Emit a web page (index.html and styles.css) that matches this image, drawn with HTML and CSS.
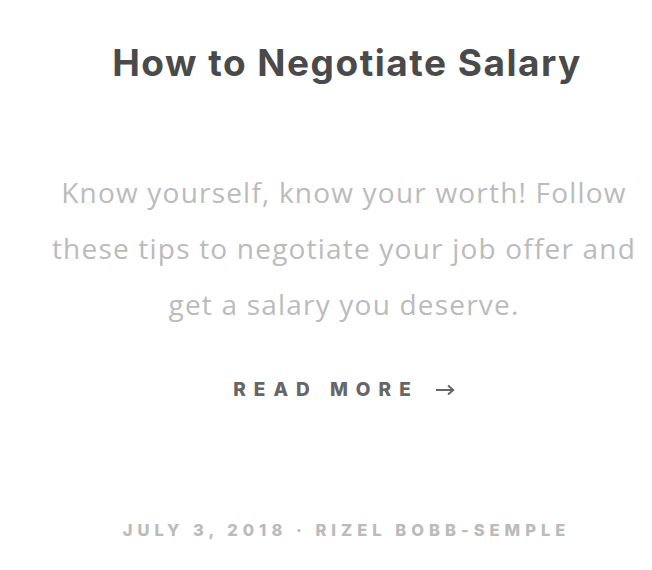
FILE: index.html
```html
<!DOCTYPE html>
<html>
<head>
<meta charset="utf-8">
<link rel="stylesheet" href="styles.css">
</head>
<body>
<article class="post">
  <h1 class="title">How to Negotiate Salary</h1>
  <p class="excerpt">Know yourself, know your worth! Follow these tips to negotiate your job offer and get a salary you deserve.</p>
  <a class="more" href="#"><span class="more-label">READ MORE</span><svg class="arrow" width="20" height="12" viewBox="0 0 20 12"><path d="M1 6H18M13 1.5L18.2 6L13 10.5" fill="none" stroke="#666" stroke-width="2"/></svg></a>
  <div class="meta">JULY 3, 2018 &middot; RIZEL BOBB-SEMPLE</div>
</article>
</body>
</html>
```
FILE: styles.css
```css
html, body {
  margin: 0;
  padding: 0;
  background: #fff;
}
.post {
  box-sizing: border-box;
  width: 652px;
  padding-left: 36px;
  display: flex;
  flex-direction: column;
  align-items: center;
  text-align: center;
}
.title {
  margin: 38px 0 0 6px;
  font-family: Inter, "Liberation Sans", sans-serif;
  font-weight: 700;
  font-size: 37px;
  line-height: 50px;
  letter-spacing: 1.5px;
  color: #4a4a4a;
}
.excerpt {
  margin: 76px 0 0;
  width: 600px;
  font-family: "Open Sans", sans-serif;
  font-weight: 400;
  font-size: 28px;
  line-height: 56px;
  letter-spacing: 1.2px;
  color: #bbbbbb;
}
.more {
  margin-top: 46px;
  display: flex;
  align-items: center;
  gap: 16px;
  font-family: Inter, sans-serif;
  font-weight: 800;
  font-size: 19px;
  letter-spacing: 8px;
  color: #666;
  text-decoration: none;
}
.arrow {
  display: block;
}
.meta {
  margin-top: 119px;
  margin-right: -5px;
  font-family: Inter, sans-serif;
  font-weight: 800;
  font-size: 16.5px;
  letter-spacing: 5px;
  color: #bbb;
}
```
